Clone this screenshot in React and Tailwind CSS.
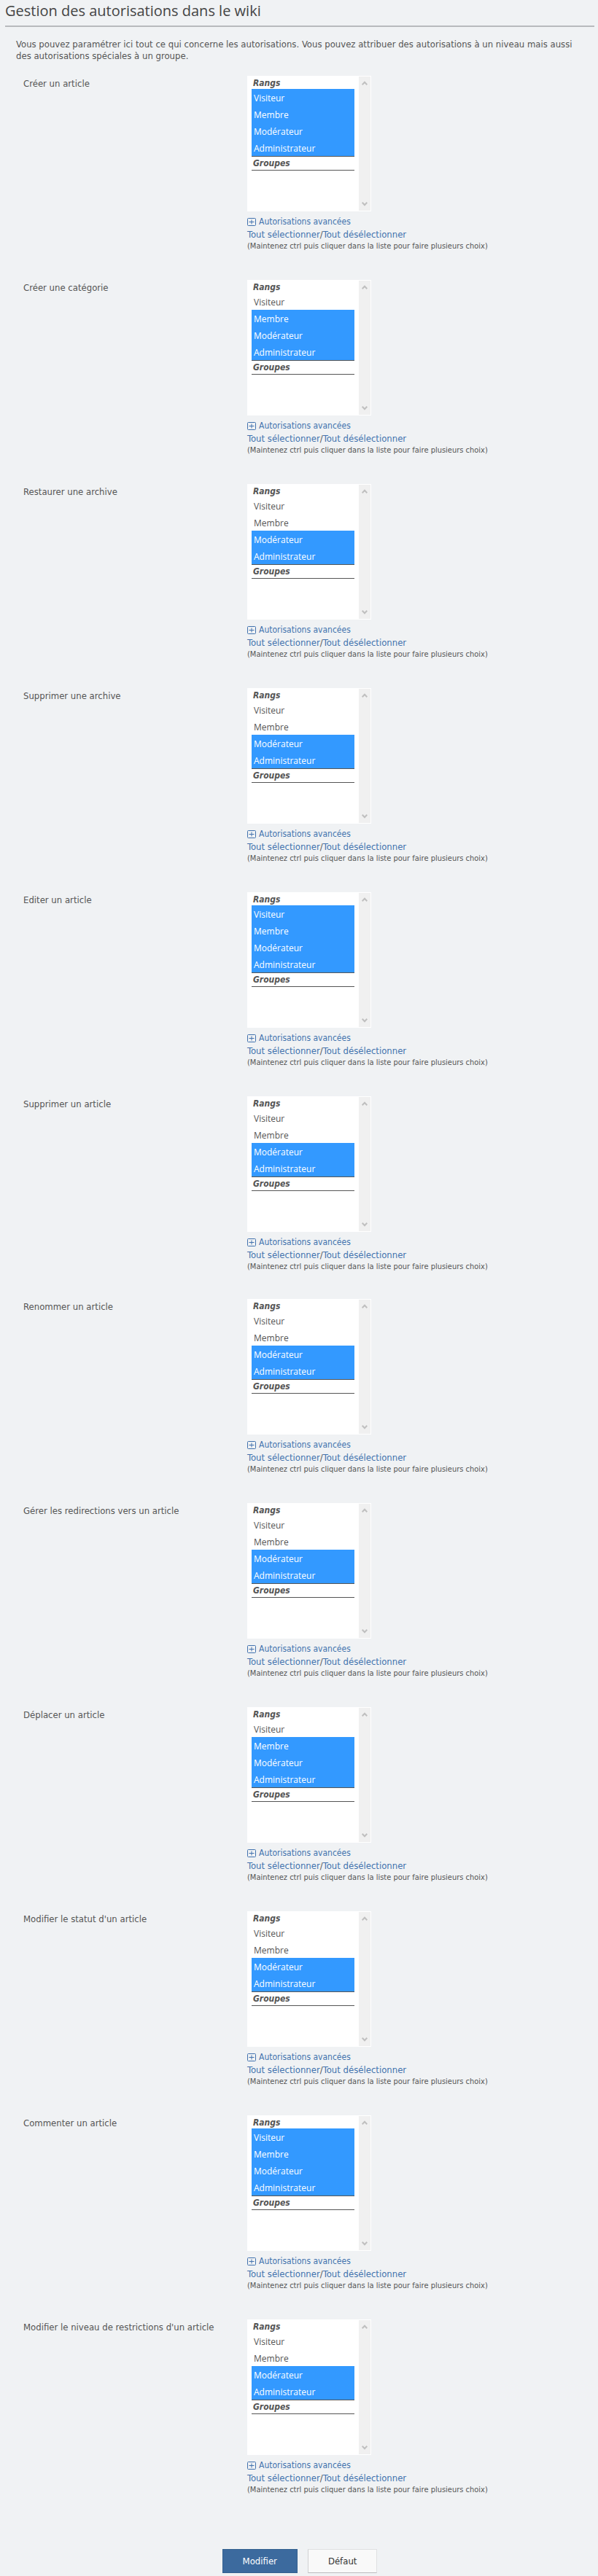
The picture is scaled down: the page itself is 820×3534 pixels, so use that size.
import React from "react";

const ranks = ["Visiteur", "Membre", "Modérateur", "Administrateur"];

// `from` is the index of the lowest rank that holds the permission.
const sections = [
  [
    { id: "create-article", label: "Créer un article", from: 0 },
    { id: "create-category", label: "Créer une catégorie", from: 1 },
    { id: "restore-archive", label: "Restaurer une archive", from: 2 },
    { id: "delete-archive", label: "Supprimer une archive", from: 2 },
    { id: "edit-article", label: "Editer un article", from: 0 },
    { id: "delete-article", label: "Supprimer un article", from: 2 },
  ],
  [
    { id: "rename-article", label: "Renommer un article", from: 2 },
    { id: "redirections", label: "Gérer les redirections vers un article", from: 2 },
    { id: "move-article", label: "Déplacer un article", from: 1 },
    { id: "article-status", label: "Modifier le statut d'un article", from: 2 },
    { id: "comment-article", label: "Commenter un article", from: 0 },
    { id: "restriction-level", label: "Modifier le niveau de restrictions d'un article", from: 2 },
  ],
];

function Chevron({ down }) {
  return (
    <svg width="8" height="6" viewBox="0 0 8 6" fill="none" stroke="#bfbfbf" strokeWidth="2" aria-hidden="true">
      <path d={down ? "M0.7 0.8 L4 4.2 L7.3 0.8" : "M0.7 5.2 L4 1.8 L7.3 5.2"} />
    </svg>
  );
}

function PlusBox() {
  return (
    <svg width="12" height="11" viewBox="0 0 12 11" fill="none" stroke="#4272ae" aria-hidden="true">
      <rect x="0.5" y="0.5" width="11" height="10" rx="1" />
      <path d="M2.5 5.5 H9.5 M6 2.5 V8.5" />
    </svg>
  );
}

function RankSelect({ id, from }) {
  return (
    <div className="flex h-[186px] w-[170px] border border-white bg-white">
      <select
        id={id}
        multiple
        defaultValue={ranks.slice(from)}
        className="h-full min-w-0 flex-1 appearance-none overflow-hidden bg-white pr-[6px] pl-[5px] text-[#555] outline-none"
      >
        <optgroup
          label="Rangs"
          className="border-b border-[#555] pt-[2px] font-['DejaVu_Sans_Condensed','DejaVu_Sans',sans-serif] text-[12px] font-bold italic"
        >
          {ranks.map((rank) => (
            <option
              key={rank}
              value={rank}
              className="h-[23px] p-0 pt-1 pl-[3px] font-['Open_Sans',sans-serif] text-[12px] font-normal text-[#555] not-italic before:content-none checked:bg-linear-to-b checked:from-[#3399ff] checked:to-[#3399ff] checked:[-webkit-text-fill-color:white]"
            >
              {rank}
            </option>
          ))}
        </optgroup>
        <optgroup
          label="Groupes"
          className="border-b border-[#555] pt-[2px] font-['DejaVu_Sans_Condensed','DejaVu_Sans',sans-serif] text-[12px] font-bold italic"
        />
      </select>
      <div className="flex w-4 flex-col items-center justify-between bg-[#f0f0f0] py-[6px]">
        <Chevron />
        <Chevron down />
      </div>
    </div>
  );
}

function PermissionRow({ id, label, from }) {
  return (
    <div className="flex">
      <label htmlFor={id} className="w-[307px] shrink-0 pt-[3px] leading-4">
        {label}
      </label>
      <div>
        <RankSelect id={id} from={from} />
        <div className="mt-[6px] leading-[17px]">
          <a href="#avance" className="flex items-center gap-1 text-[12px] text-[#4272ae]">
            <PlusBox />
            Autorisations avancées
          </a>
          <div>
            <a href="#tout" className="text-[#4272ae]">Tout sélectionner</a>/
            <a href="#aucun" className="text-[#4272ae]">Tout désélectionner</a>
          </div>
        </div>
        <p className="text-[11px] leading-4">
          (Maintenez ctrl puis cliquer dans la liste pour faire plusieurs choix)
        </p>
      </div>
    </div>
  );
}

export default function App() {
  return (
    <main className="min-h-screen bg-[#f0f2f4] pr-[5px] pb-1 pl-[7px] font-['DejaVu_Sans_Condensed','DejaVu_Sans',sans-serif] text-[13px] text-[#555]">
      <h1 className="border-b-2 border-[#b8babd] pt-[1px] pb-[6px] font-['Open_Sans',sans-serif] text-[20px] leading-7 text-[#444]">
        Gestion des autorisations dans le wiki
      </h1>
      <p className="mt-4 px-[15px] leading-4">
        Vous pouvez paramétrer ici tout ce qui concerne les autorisations. Vous pouvez attribuer des
        autorisations à un niveau mais aussi des autorisations spéciales à un groupe.
      </p>
      <form>
        <div className="mt-[19px] flex flex-col gap-9 pl-[25px]">
          {sections.map((rows, index) => (
            <div key={index} className="flex flex-col gap-[38px]">
              {rows.map((row) => (
                <PermissionRow key={row.id} {...row} />
              ))}
            </div>
          ))}
        </div>
        <div className="mt-[73px] flex justify-center gap-[14px]">
          <button
            type="button"
            className="h-[33px] border border-[#34608f] bg-[#3c6a9e] px-[27px] text-white"
          >
            Modifier
          </button>
          <button
            type="reset"
            className="h-[33px] border border-t-[#dfe0e2] border-r-[#dfe0e2] border-b-[#bbbcbe] border-l-[#cfd0d2] bg-[#f9f9f9] px-[27px] text-[#333]"
          >
            Défaut
          </button>
        </div>
      </form>
    </main>
  );
}
